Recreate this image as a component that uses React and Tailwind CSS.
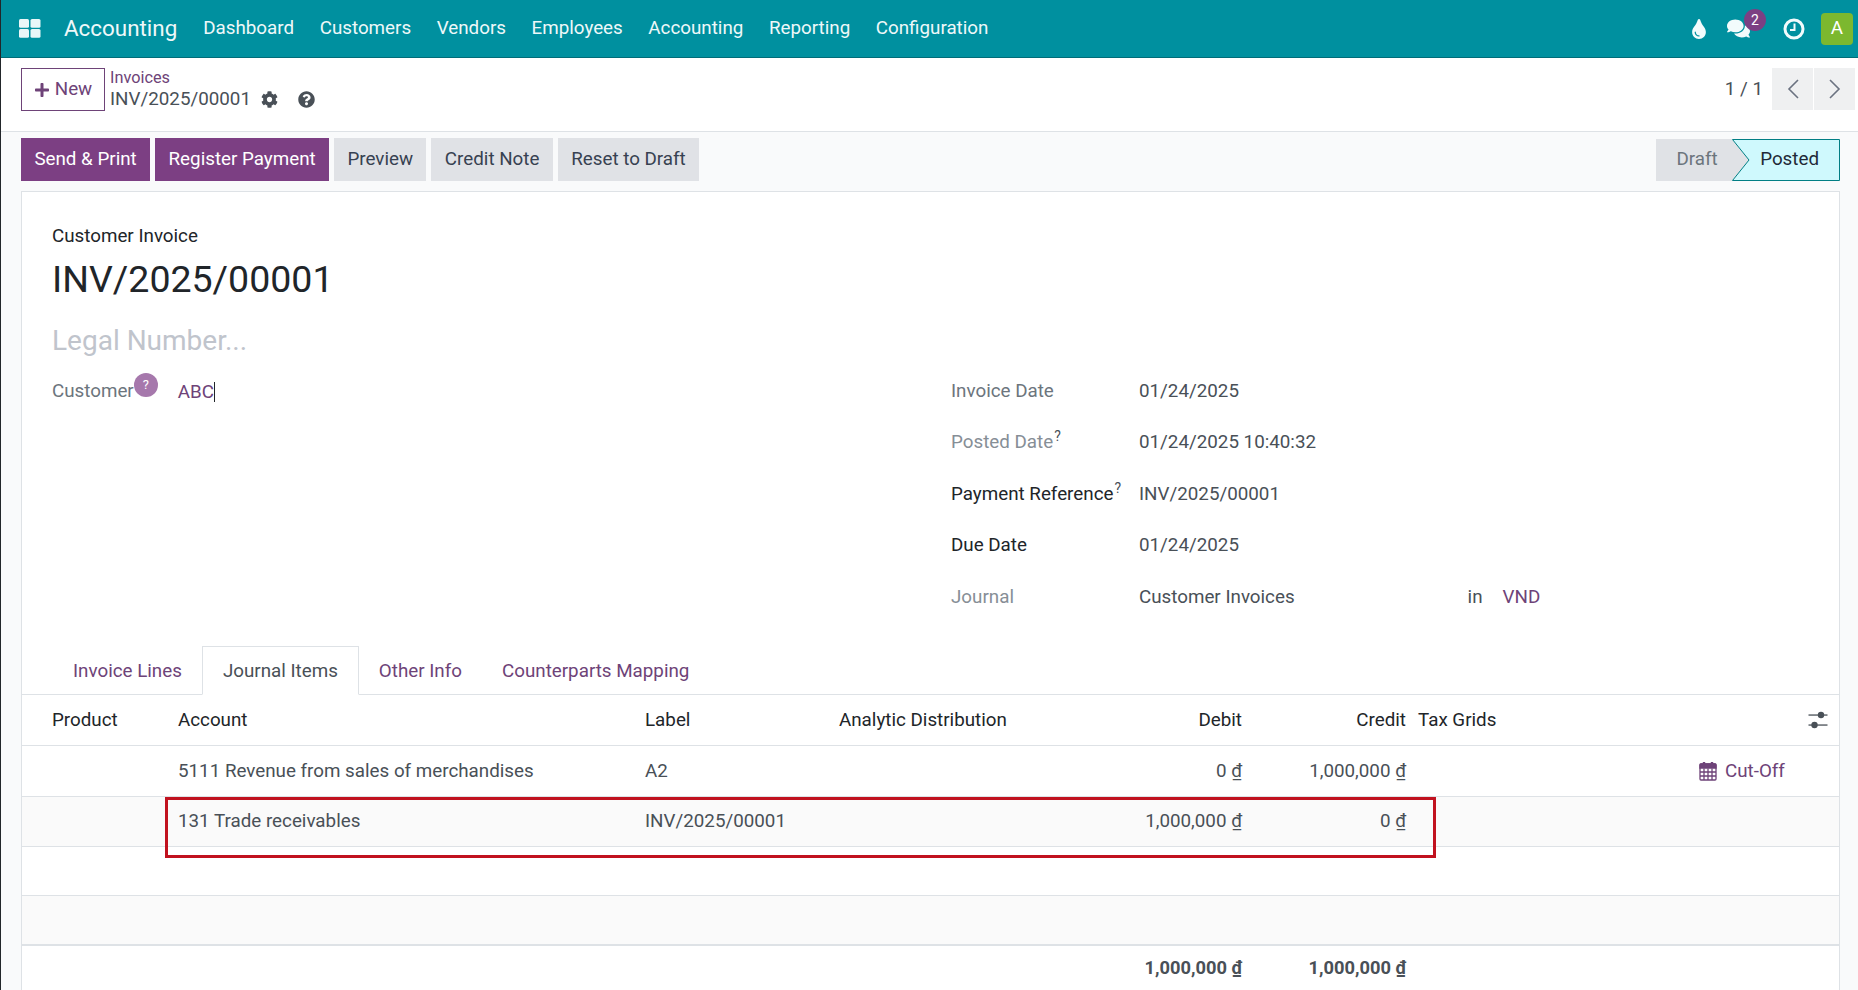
import React from "react";
import { FaCog, FaQuestionCircle, FaPlus, FaTint, FaComments } from "react-icons/fa";

const navLinks = ["Dashboard", "Customers", "Vendors", "Employees", "Accounting", "Reporting", "Configuration"];

const ClockIcon = () => (
  <svg width="22" height="22" viewBox="0 0 22 22" fill="none" stroke="#f2fbfc">
    <circle cx="11" cy="11" r="9" strokeWidth="3" />
    <path d="M11.5 5.5v6.5H7" strokeWidth="2" />
  </svg>
);

const AppsIcon = () => (
  <svg width="22" height="19" viewBox="0 0 22 19" fill="#eaf7f8">
    <rect x="0" y="0" width="10" height="8.8" rx="1.5" />
    <rect x="11.5" y="0" width="10" height="8.8" rx="1.5" />
    <rect x="0" y="10" width="10" height="8.8" rx="1.5" />
    <rect x="11.5" y="10" width="10" height="8.8" rx="1.5" />
  </svg>
);

const Chevron = ({ left }) => (
  <svg width="14" height="20" viewBox="0 0 14 20" fill="none" stroke="#6b7280" strokeWidth="1.6">
    <path d={left ? "M12 1L3 10l9 9" : "M2 1l9 9-9 9"} />
  </svg>
);

const SlidersIcon = () => (
  <svg width="20" height="18" viewBox="0 0 20 18" fill="#495057">
    <rect x="0.5" y="3.4" width="19" height="1.3" />
    <circle cx="13" cy="4" r="3.2" />
    <rect x="0.5" y="13.4" width="19" height="1.3" />
    <circle cx="6.5" cy="14" r="3.2" />
  </svg>
);

const CalendarIcon = () => (
  <svg width="18" height="20" viewBox="0 0 18 20" fill="none" stroke="#6e4378" strokeWidth="1.3">
    <path d="M1 7V4a1 1 0 0 1 1-1h14a1 1 0 0 1 1 1v3z" fill="#6e4378" />
    <rect x="1" y="3" width="16" height="16" rx="1" />
    <path d="M1 11h16M1 15h16M5 7.5V19M9 7.5V19M13 7.5V19" />
    <path d="M5 1v4M13 1v4" strokeWidth="2.4" />
  </svg>
);

const Dong = ({ bold }) => <span className={`underline ${bold ? "font-bold" : ""}`}>₫</span>;

const Money = ({ value, bold }) => (
  <span>
    {value} <Dong bold={bold} />
  </span>
);

const Field = ({ label, value, strong, help, muted, children }) => (
  <div className="flex h-[51.5px] items-center">
    <div className={`w-[188px] shrink-0 ${strong ? "text-[#212529]" : muted ? "text-[#868e96]" : "text-[#6c757d]"}`}>
      {label}
      {help && <sup className="ml-px text-[14px] text-[#495057]">?</sup>}
    </div>
    <div className="whitespace-nowrap text-[#495057]">{value}</div>
    {children}
  </div>
);

const Row = ({ striped, height, account, label, debit, credit, cutOff }) => (
  <tr className={`border-b border-[#dee2e6] ${striped ? "bg-[#fafafa]" : ""}`}>
    <td className={height}></td>
    <td className="px-1.5">{account}</td>
    <td className="px-1.5">{label}</td>
    <td className="px-1.5"></td>
    <td className="px-1.5 text-right">{debit && <Money value={debit} />}</td>
    <td className="px-1.5 text-right">{credit && <Money value={credit} />}</td>
    <td className="px-1.5"></td>
    <td className="pl-[9px]">
      {cutOff && (
        <span className="flex items-center gap-[8px] text-[#6e4378]">
          <CalendarIcon />
          Cut-Off
        </span>
      )}
    </td>
    <td></td>
  </tr>
);

export default function App() {
  return (
    <div className="flex h-[990px] flex-col overflow-hidden border-l border-[#22262a] bg-[#f9fafb] font-['Roboto',sans-serif] text-[18.8px] text-[#495057]">
      <header className="flex h-[58px] shrink-0 items-center border-b border-[#006c78] bg-[#00909f] pl-[18px] pr-[5px] text-[#eef8f9]">
        <AppsIcon />
        <span className="ml-[23px] mr-[26px] text-[22.4px]">Accounting</span>
        <nav className="flex gap-[25.6px]">
          {navLinks.map((item) => (
            <span key={item}>{item}</span>
          ))}
        </nav>
        <div className="ml-auto flex items-center">
          <FaTint className="text-[20px] text-[#f2fbfc]" />
          <div className="relative ml-[18px] mr-[33px]">
            <FaComments className="text-[23px] text-[#f2fbfc]" />
            <span className="absolute -right-[16px] -top-[8px] flex h-[22px] w-[22px] items-center justify-center rounded-full bg-[#7c3f83] text-[14px] text-white">
              2
            </span>
          </div>
          <ClockIcon />
          <span className="ml-[16px] flex h-[32px] w-[32px] items-center justify-center rounded bg-[#7cb82f] text-white">
            A
          </span>
        </div>
      </header>

      <div className="flex h-[74px] shrink-0 items-start border-b border-[#dee2e6] bg-white pl-[20px] pr-[3px] pt-[10px]">
        <button className="flex h-[43px] w-[84px] items-center justify-center gap-[5px] border border-[#6e4378] text-[#6e4378]">
          <FaPlus className="text-[16px]" />
          New
        </button>
        <div className="ml-[5px]">
          <div className="text-[16.3px] leading-[20px] text-[#6e4378]">Invoices</div>
          <div className="flex items-center leading-[22px]">
            INV/2025/00001
            <FaCog className="ml-[10px] text-[17px]" />
            <FaQuestionCircle className="ml-[20px] text-[17px]" />
          </div>
        </div>
        <div className="ml-auto flex items-center gap-[1px]">
          <span className="mr-[8px]">1 / 1</span>
          <span className="flex h-[42px] w-[41px] items-center justify-center bg-[#eff0f1]">
            <Chevron left />
          </span>
          <span className="flex h-[42px] w-[41px] items-center justify-center bg-[#eff0f1]">
            <Chevron />
          </span>
        </div>
      </div>

      <div className="flex shrink-0 items-center gap-[5px] pl-[20px] pr-[18px] pt-[6px]">
        <button className="h-[43px] bg-[#7c3f83] px-[13.4px] text-white">Send &amp; Print</button>
        <button className="h-[43px] bg-[#7c3f83] px-[13.4px] text-white">Register Payment</button>
        <button className="h-[43px] bg-[#e0e2e6] px-[13.4px] text-[#374151]">Preview</button>
        <button className="h-[43px] bg-[#e0e2e6] px-[13.4px] text-[#374151]">Credit Note</button>
        <button className="h-[43px] bg-[#e0e2e6] px-[13.4px] text-[#374151]">Reset to Draft</button>
        <div className="relative ml-auto flex h-[42px] items-center">
          <span className="flex h-full w-[76px] items-center justify-center bg-[#e0e2e6] pl-[6px] text-[#6c757d]">Draft</span>
          <svg width="108" height="42" viewBox="0 0 108 42" className="shrink-0" fill="#cff9fd" stroke="#017e84">
            <path d="M0 0L17 21L0 42Z" fill="#e0e2e6" stroke="none" />
            <path d="M0.5 0.5H107.5V41.5H0.5L17 21Z" />
          </svg>
          <span className="absolute right-[21px] text-[#1f2937]">Posted</span>
        </div>
      </div>

      <main className="ml-[20px] mr-[18px] mt-[10px] flex-1 border border-[#dee2e6] bg-white">
        <div className="pl-[30px] pt-[34px]">
          <div className="leading-[21px] text-[#212529]">Customer Invoice</div>
          <h1 className="mt-[9px] text-[37.5px] leading-[46px] text-[#212529]">INV/2025/00001</h1>
          <div className="mt-[19px] text-[28px] leading-[40px] text-[#c0c4cc]">Legal Number...</div>
        </div>

        <div className="mt-[4px] flex pl-[30px]">
          <div className="w-[899px] shrink-0 pt-[7px]">
            <div className="flex h-[38px] items-center">
              <span className="text-[#6c757d]">Customer</span>
              <span className="-mt-[12px] flex h-[24px] w-[24px] items-center justify-center rounded-full bg-[#a678ac] text-[13px] text-white">
                ?
              </span>
              <span className="ml-[20px] mt-px border-r border-[#212529] leading-[20px] text-[#6e4378]">ABC</span>
            </div>
          </div>
          <div className="w-[560px]">
            <Field label="Invoice Date" value="01/24/2025" />
            <Field label="Posted Date" value="01/24/2025 10:40:32" help muted />
            <Field label="Payment Reference" value="INV/2025/00001" help strong />
            <Field label="Due Date" value="01/24/2025" strong />
            <Field label="Journal" value="Customer Invoices" muted>
              <span className="ml-[173px] text-[#495057]">in</span>
              <span className="ml-[20px] text-[#6e4378]">VND</span>
            </Field>
          </div>
        </div>

        <div className="mt-[23px] flex h-[49px] border-b border-[#dee2e6] pl-[30px] text-[#6e4378]">
          <span className="flex items-center pl-[21px] pr-[20px] pt-[3px]">Invoice Lines</span>
          <span className="-mb-px flex items-center border border-b-white border-[#dee2e6] bg-white px-[20px] pt-[3px] text-[#495057]">Journal Items</span>
          <span className="flex items-center px-[20px] pt-[3px]">Other Info</span>
          <span className="flex items-center px-[20px] pt-[3px]">Counterparts Mapping</span>
        </div>

        <div className="relative">
          <table className="w-full table-fixed border-collapse">
            <colgroup>
              <col className="w-[150px]" />
              <col className="w-[467px]" />
              <col className="w-[194px]" />
              <col className="w-[227px]" />
              <col className="w-[188px]" />
              <col className="w-[164px]" />
              <col className="w-[278px]" />
              <col className="w-[110px]" />
              <col />
            </colgroup>
            <thead>
              <tr className="border-b border-[#dee2e6] text-left text-[#212529]">
                <th className="h-[51px] pl-[30px] font-normal">Product</th>
                <th className="px-1.5 font-normal">Account</th>
                <th className="px-1.5 font-normal">Label</th>
                <th className="px-1.5 font-normal">Analytic Distribution</th>
                <th className="px-1.5 text-right font-normal">Debit</th>
                <th className="px-1.5 text-right font-normal">Credit</th>
                <th className="px-1.5 font-normal">Tax Grids</th>
                <th></th>
                <th className="pl-[8px]"><SlidersIcon /></th>
              </tr>
            </thead>
            <tbody>
              <Row height="h-[51px]" account="5111 Revenue from sales of merchandises" label="A2" debit="0" credit="1,000,000" cutOff />
              <Row height="h-[50px]" striped account="131 Trade receivables" label="INV/2025/00001" debit="1,000,000" credit="0" />
              <Row height="h-[49px]" />
              <Row height="h-[49px]" striped />
            </tbody>
            <tfoot>
              <tr className="border-t-2 border-[#dee2e6] text-[18.3px] font-bold">
                <td className="h-[46px]" colSpan={4}></td>
                <td className="px-1.5 text-right"><Money value="1,000,000" bold /></td>
                <td className="px-1.5 text-right"><Money value="1,000,000" bold /></td>
                <td colSpan={3}></td>
              </tr>
            </tfoot>
          </table>
          <div className="pointer-events-none absolute left-[143px] top-[102px] h-[61px] w-[1271px] border-[3px] border-[#c1121f]"></div>
        </div>
      </main>
    </div>
  );
}
